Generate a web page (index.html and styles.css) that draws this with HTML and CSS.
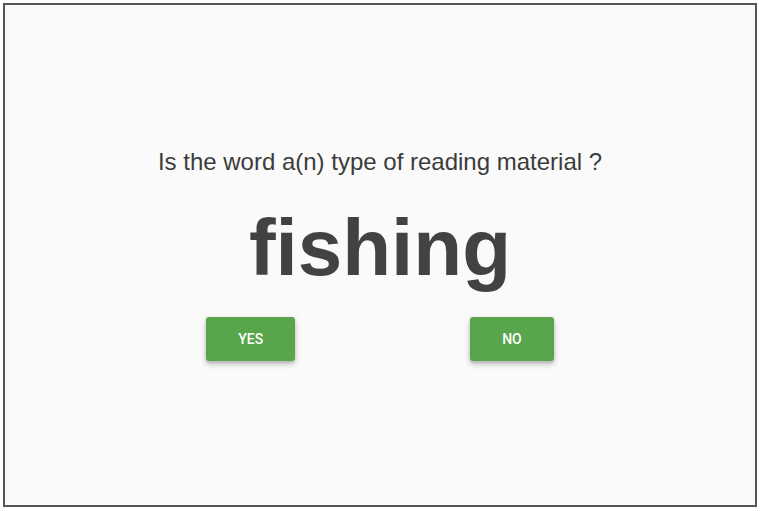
FILE: index.html
```html
<!DOCTYPE html>
<html>
<head>
<meta charset="utf-8">
<link rel="stylesheet" href="styles.css">
</head>
<body>
<div class="frame">
  <div class="quiz">
    <p class="question">Is the word a(n) type of reading material ?</p>
    <h1 class="word">fishing</h1>
    <div class="actions">
      <button class="btn">YES</button>
      <button class="btn">NO</button>
    </div>
  </div>
</div>
</body>
</html>
```

FILE: styles.css
```css
html, body {
  margin: 0;
  padding: 0;
  background: #ffffff;
}
body {
  padding: 3px 4px 4px 3px;
  font-family: "Liberation Sans", Arial, sans-serif;
}
.frame {
  box-sizing: border-box;
  height: 504px;
  border: 2px solid #555555;
  background: #fafafa;
  display: flex;
  flex-direction: column;
  align-items: center;
}
.quiz {
  display: flex;
  flex-direction: column;
  align-items: center;
  padding-top: 140px;
}
.question {
  margin: 0;
  font-size: 24px;
  line-height: 34px;
  color: #3c3c3c;
}
.word {
  margin: 23px 0 0 0;
  font-size: 80px;
  line-height: 92px;
  font-weight: bold;
  color: #424242;
}
.actions {
  display: flex;
  gap: 175px;
  margin-top: 23px;
}
.btn {
  height: 44px;
  padding: 0 32px;
  border: none;
  border-radius: 3px;
  background: #58a54b;
  color: #ffffff;
  font-family: Roboto, "Liberation Sans", sans-serif;
  font-weight: 500;
  font-size: 14px;
  box-shadow: 0 3px 6px rgba(0,0,0,0.22), 0 2px 3px rgba(0,0,0,0.12);
}
```
